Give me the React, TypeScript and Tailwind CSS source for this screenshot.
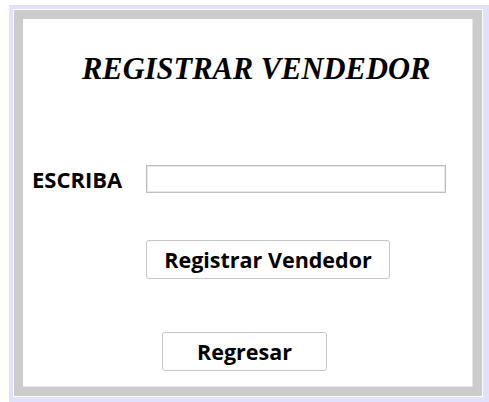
export default function App() {
  return (
    <div className="w-[489px] h-[402px] bg-white pl-[9px] pt-[5px]">
      <div className="w-[480px] h-[397px] bg-[#e1e1fb] pl-[4px] pt-[4px]">
        <div className="w-[470px] h-[388px] border border-white bg-[#cccccc] p-[9px]">
          <div className="w-[450px] h-[368px] bg-white border-r border-b border-[#e6e6e6] flex flex-col" style={{ fontFamily: "'Open Sans', 'Noto Sans', sans-serif" }}>
            <h1
              className="ml-[59px] mt-[32px] text-[30.5px] leading-[36px] font-bold italic text-black"
              style={{ fontFamily: "'Liberation Serif', serif" }}
            >
              REGISTRAR VENDEDOR
            </h1>
            <div className="flex items-center mt-[78px] h-[28px]">
              <span className="ml-[9px] w-[114px] text-[22px] font-bold text-black leading-none">ESCRIBA</span>
              <input className="w-[300px] h-[28px] border border-[#bdbdbd] bg-white outline-none shadow-[inset_0_0_0_1px_#e8e8e8]" />
            </div>
            <div className="mt-[47px] ml-[123px]">
              <button className="w-[244px] h-[39px] rounded-[3px] border border-[#c6c6c6] bg-white text-[21.5px] font-bold text-black leading-none">
                Registrar Vendedor
              </button>
            </div>
            <div className="mt-[53px] ml-[139px]">
              <button className="w-[165px] h-[39px] rounded-[3px] border border-[#c6c6c6] bg-white text-[21.5px] font-bold text-black leading-none">
                Regresar
              </button>
            </div>
          </div>
        </div>
      </div>
    </div>
  );
}
